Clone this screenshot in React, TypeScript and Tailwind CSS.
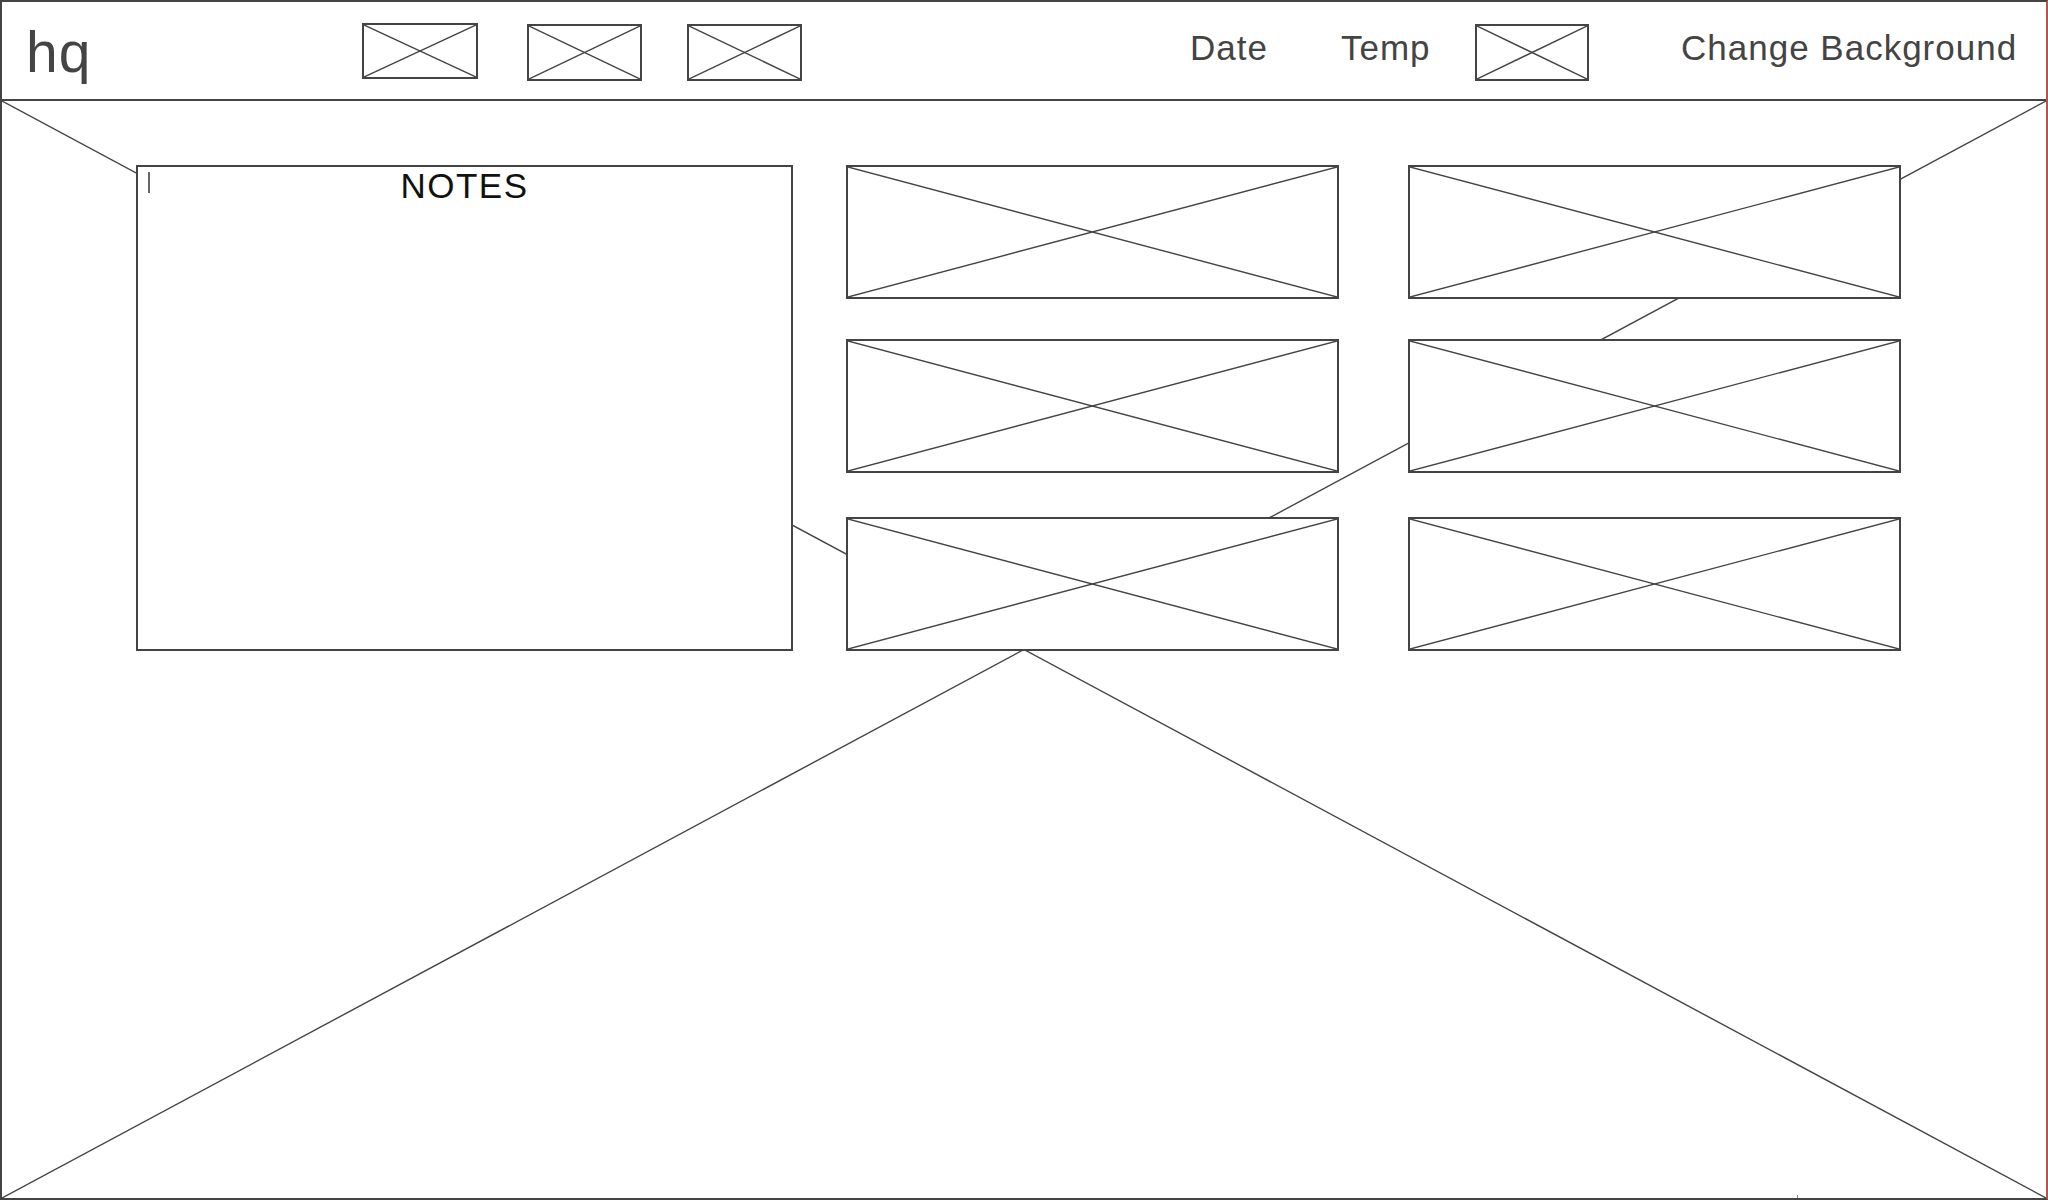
import React from "react";

const Ph = ({ className }: { className: string }) => (
  <div className={`border-2 border-[#444] bg-white shrink-0 ${className}`}>
    <svg className="block w-full h-full" viewBox="0 0 100 100" preserveAspectRatio="none">
      <line x1="0" y1="0" x2="100" y2="100" stroke="#444" strokeWidth="1.4" vectorEffect="non-scaling-stroke" />
      <line x1="100" y1="0" x2="0" y2="100" stroke="#444" strokeWidth="1.4" vectorEffect="non-scaling-stroke" />
    </svg>
  </div>
);

const Column = ({ className }: { className: string }) => (
  <div className={`flex flex-col ${className}`}>
    <Ph className="w-[493px] h-[134px]" />
    <Ph className="mt-[40px] w-[493px] h-[134px]" />
    <Ph className="mt-[44px] w-[493px] h-[134px]" />
  </div>
);

export default function App() {
  return (
    <div className="w-[2048px] h-[1200px] flex flex-col border-2 border-[#444] border-r-[#b85450] bg-white font-['Liberation_Sans',Arial,sans-serif] overflow-hidden">
      <header className="h-[99px] shrink-0 flex items-center border-b-2 border-[#444] text-[#444]">
        <div className="w-[360px] shrink-0 pl-[24px] text-[57px] leading-none tracking-[1px] mt-[3px]">hq</div>
        <Ph className="w-[116px] h-[56px]" />
        <Ph className="ml-[49px] w-[115px] h-[57px] mt-[3px]" />
        <Ph className="ml-[45px] w-[115px] h-[57px] mt-[3px]" />
        <div className="ml-[388px] w-[151px] shrink-0 text-[35px] leading-none tracking-[1px] -mt-[6px]">Date</div>
        <div className="w-[134px] shrink-0 text-[35px] leading-none tracking-[1px] -mt-[6px]">Temp</div>
        <Ph className="w-[114px] h-[57px] mt-[3px]" />
        <div className="ml-[92px] shrink-0 whitespace-nowrap text-[35px] leading-none tracking-[1px] -mt-[6px]">Change Background</div>
      </header>
      <main className="relative flex-1">
        <svg className="absolute inset-0 w-full h-full" viewBox="0 0 100 100" preserveAspectRatio="none">
          <line x1="0" y1="0" x2="100" y2="100" stroke="#444" strokeWidth="1.4" vectorEffect="non-scaling-stroke" />
          <line x1="100" y1="0" x2="0" y2="100" stroke="#444" strokeWidth="1.4" vectorEffect="non-scaling-stroke" />
        </svg>
        <div className="relative flex items-start pl-[134px] pt-[64px]">
          <div className="relative w-[657px] h-[486px] shrink-0 border-2 border-[#444] bg-white">
            <span className="absolute left-[10px] top-[5px] w-[2px] h-[21px] bg-[#666]" />
            <div className="mt-[1px] text-center text-[35px] leading-none tracking-[1.5px] text-[#111]">NOTES</div>
          </div>
          <Column className="ml-[53px]" />
          <Column className="ml-[69px]" />
        </div>
        <span className="absolute bottom-0 left-[1795px] w-px h-[3px] bg-[#888]" />
      </main>
    </div>
  );
}
